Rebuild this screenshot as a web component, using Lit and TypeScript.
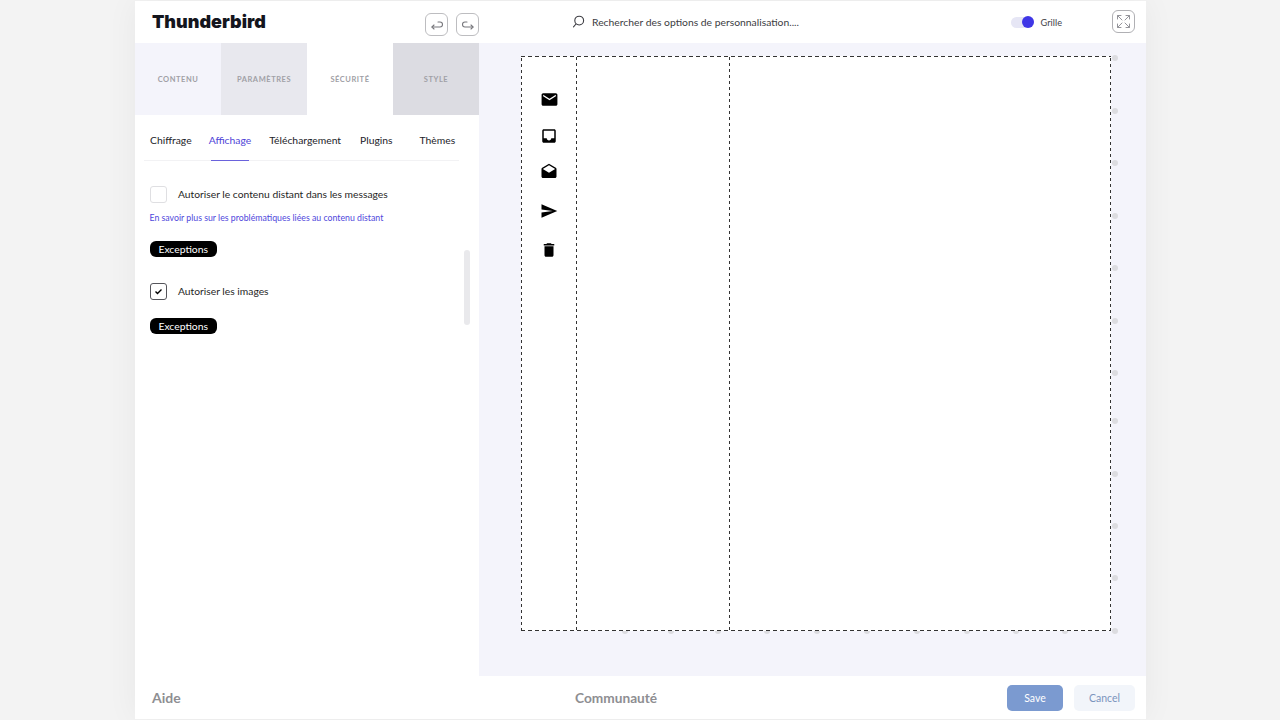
import { LitElement, html, css, svg } from "lit";
import { customElement } from "lit/decorators.js";

const rightDots = [58, 111, 163, 216, 268, 321, 373, 421, 474, 526, 578, 631];
const bottomDots = [625, 671, 718, 767, 817, 867, 917, 967, 1016, 1065];

const icons = [
  svg`<path d="M20 4H4c-1.1 0-2 .9-2 2v12c0 1.1.9 2 2 2h16c1.1 0 2-.9 2-2V6c0-1.1-.9-2-2-2zm0 4-8 5-8-5V6l8 5 8-5v2z"/>`,
  svg`<path d="M19 3H5c-1.1 0-2 .9-2 2v14c0 1.1.9 2 2 2h14c1.1 0 2-.9 2-2V5c0-1.1-.9-2-2-2zm0 12h-4c0 1.66-1.35 3-3 3s-3-1.34-3-3H5V5h14v10z"/>`,
  svg`<path d="M21.99 8c0-.72-.37-1.35-.94-1.7L12 1 2.95 6.3C2.38 6.65 2 7.28 2 8v10c0 1.1.9 2 2 2h16c1.1 0 2-.9 2-2l-.01-10zM12 13 3.74 7.84 12 3l8.26 4.84L12 13z"/>`,
  svg`<path d="M2.01 21 23 12 2.01 3 2 10l15 2-15 2z"/>`,
  svg`<path d="M6 19c0 1.1.9 2 2 2h8c1.1 0 2-.9 2-2V7H6v12zM19 4h-3.500l-1-1h-5l-1 1H5v2h14V4z"/>`,
];

@customElement("app-root")
export class AppRoot extends LitElement {
  static styles = css`
    :host { display: block; width: 1280px; height: 720px; background: #f3f3f3; font-family: Lato, "Liberation Sans", sans-serif; color: #1c1c22; overflow: hidden; }
    .page { height: 720px; padding: 1px 134px 1px 135px; box-sizing: border-box; }
    .window { height: 718px; background: #fff; display: grid; grid-template-columns: 344px 1fr; grid-template-rows: 42px 633px 43px; box-shadow: 0 0 30px rgba(0,0,0,.05); }
    .head-left { display: flex; align-items: center; padding: 0 0 0 17px; }
    .logo { font-family: Inter, "Open Sans", sans-serif; font-weight: 900; font-size: 18px; color: #14151d; flex: 1; margin-top: -1px; }
    .icon-btn { width: 23px; height: 23px; box-sizing: border-box; border: 1px solid #bdbdc0; border-radius: 6px; display: flex; align-items: center; justify-content: center; margin-left: 8px; margin-top: 5px; color: #77777c; }
    .head-right { display: flex; align-items: center; padding: 0 11px 0 93px; }
    .search { display: flex; align-items: center; gap: 7px; font-size: 10.35px; color: #3c3c42; flex: 1; margin-top: -1px; }
    .toggle { display: flex; align-items: center; gap: 7px; font-size: 9.2px; color: #444449; margin-right: 50px; }
    .track { width: 23px; height: 11px; border-radius: 6px; background: #e6e6f5; position: relative; }
    .knob { position: absolute; right: 0; top: -.5px; width: 12px; height: 12px; border-radius: 50%; background: #3f36e6; }
    .expand { width: 23px; height: 23px; box-sizing: border-box; border: 1px solid #b0b0b4; border-radius: 6px; display: flex; align-items: center; justify-content: center; color: #94949a; margin-top: -1px; }
    .left { display: flex; flex-direction: column; }
    .tabs { display: grid; grid-template-columns: repeat(4, 86px); height: 72px; }
    .tab { display: flex; align-items: center; justify-content: center; font-size: 7.5px; font-weight: 700; letter-spacing: .55px; color: #a0a0a6; padding-top: 1px; }
    .t1 { background: #f4f4fb; } .t2 { background: #e8e8ee; } .t3 { background: #fff; } .t4 { background: #dcdce2; }
    .subtabs { display: flex; gap: 18px; margin: 0 20px 0 9px; padding-left: 6px; height: 45px; border-bottom: 1px solid #f2f2f4; font-size: 10.35px; color: #23232a; }
    .sub { display: flex; align-items: center; position: relative; padding-top: 5px; box-sizing: border-box; }
    .sub:nth-child(2) { margin-left: -1px; }
    .sub:nth-child(4) { margin-left: 1px; }
    .sub:nth-child(5) { margin-left: 9px; }
    .sub.on { color: #4f45d8; }
    .sub.on::after { content: ""; position: absolute; left: 2px; right: 2px; bottom: -1px; height: 1px; background: #6a62dc; }
    .content { flex: 1; position: relative; padding: 24px 0 0 14.5px; }
    .row { display: flex; align-items: center; gap: 11.5px; font-size: 10.3px; height: 18px; color: #1f1f26; }
    .box { width: 17px; height: 17px; box-sizing: border-box; border: 1px solid #dfdfe2; border-radius: 3px; display: flex; align-items: center; justify-content: center; }
    .box.on { border-color: #55555b; }
    .label { margin-top: -1px; }
    .link { font-size: 8.75px; color: #5048dc; margin-top: 9px; line-height: 11px; }
    .pill { display: inline-flex; align-items: center; justify-content: center; width: 67.5px; height: 16px; border-radius: 6px; background: #000; color: #fff; font-size: 10.4px; }
    .p1 { margin-top: 18px; }
    .r2 { margin-top: 25px; }
    .p2 { margin-top: 18px; }
    .scroll { position: absolute; left: 329px; top: 89px; width: 6px; height: 75px; border-radius: 3px; background: #e9e9ec; }
    .stage { background: #f4f4fb; position: relative; overflow: hidden; padding: 13px 35px 0 42px; }
    .canvas {
      width: 590px; height: 575px; box-sizing: border-box; position: relative;
      display: grid; grid-template-columns: 56px 153px 1fr; padding: 0 1px 1px 0;
      background-color: #fff;
      background-image:
        repeating-linear-gradient(90deg, #333 0 4px, transparent 4px 7px),
        repeating-linear-gradient(90deg, #333 0 4px, transparent 4px 7px),
        repeating-linear-gradient(0deg, #333 0 3px, transparent 3px 6px),
        repeating-linear-gradient(0deg, #333 0 3px, transparent 3px 6px);
      background-size: 100% 1px, 100% 1px, 1px 100%, 1px 100%;
      background-position: 0 0, 0 100%, 0 0, 100% 0;
      background-repeat: no-repeat;
    }
    .col {
      background-image: repeating-linear-gradient(0deg, #333 0 3px, transparent 3px 6px);
      background-size: 1px 100%; background-position: 100% 0; background-repeat: no-repeat;
    }
    .col:last-child { background: none; }
    .rail { display: flex; flex-direction: column; align-items: center; padding-top: 33px; }
    .slot { height: 37px; }
    .slot svg { display: block; width: 18px; height: 18px; margin: 1px; fill: #000; }
    .slot:first-child svg { width: 19px; height: 19px; margin: .5px; }
    .slot:nth-child(2) { height: 36px; }
    .slot:nth-child(3), .slot:nth-child(4) { height: 39px; }
    .dot { position: absolute; width: 6px; height: 6px; border-radius: 50%; background: #dcdce0; }
    .foot { display: flex; align-items: center; font-size: 14px; font-weight: 700; color: #8e8e92; padding-left: 17px; }
    .foot-r { display: flex; align-items: center; padding: 0 11px 0 96px; font-size: 13.7px; font-weight: 700; color: #8e8e92; }
    .foot-r .c { flex: 1; }
    .btn { height: 26px; border-radius: 5px; display: flex; align-items: center; justify-content: center; font-size: 10.5px; font-weight: 400; }
    .save { width: 56px; background: #7b9ad0; color: #fff; margin-right: 11px; }
    .cancel { width: 61px; background: #f2f5fa; color: #7b94bd; }
  `;

  render() {
    const subs: [string, boolean][] = [
      ["Chiffrage", false], ["Affichage", true], ["Téléchargement", false], ["Plugins", false], ["Thèmes", false],
    ];
    return html`<div class="page"><div class="window">
      <div class="head-left">
        <div class="logo">Thunderbird</div>
        <div class="icon-btn"><svg width="14" height="14" viewBox="0 0 14 14" fill="none" stroke="currentColor" stroke-width="1.1" stroke-linecap="round" stroke-linejoin="round"><path d="M2 9h8a2.500 2.500 0 0 0 0-5H8"/><path d="M4 7 2 9l2 2"/></svg></div>
        <div class="icon-btn"><svg width="14" height="14" viewBox="0 0 14 14" fill="none" stroke="currentColor" stroke-width="1.1" stroke-linecap="round" stroke-linejoin="round"><path d="M12 9H4a2.500 2.500 0 0 1 0-5h2"/><path d="m10 7 2 2-2 2"/></svg></div>
      </div>
      <div class="head-right">
        <div class="search">
          <svg width="13" height="13" viewBox="0 0 13 13" fill="none" stroke="#3c3c42" stroke-width="1.1" stroke-linecap="round"><circle cx="7.200" cy="5.600" r="4.400"/><path d="M4 9 1.500 11.800"/></svg>
          Rechercher des options de personnalisation....
        </div>
        <div class="toggle"><div class="track"><div class="knob"></div></div>Grille</div>
        <div class="expand"><svg width="17" height="17" viewBox="0 0 17 17" fill="none" stroke="currentColor" stroke-width="1" stroke-linecap="round" stroke-linejoin="round"><path d="M7 7 2.500 2.500M2.500 6V2.500H6M10 7l4.500-4.500M11 2.500h3.500V6M7 10l-4.500 4.500M2.500 11v3.500H6M10 10l4.500 4.500M14.500 11v3.500H11"/></svg></div>
      </div>
      <div class="left">
        <div class="tabs">
          <div class="tab t1">CONTENU</div><div class="tab t2">PARAMÈTRES</div><div class="tab t3">SÉCURITÉ</div><div class="tab t4">STYLE</div>
        </div>
        <div class="subtabs">
          ${subs.map(([t, on]) => html`<div class="sub ${on ? "on" : ""}">${t}</div>`)}
        </div>
        <div class="content">
          <div class="row"><div class="box"></div><span class="label">Autoriser le contenu distant dans les messages</span></div>
          <div class="link">En savoir plus sur les problématiques liées au contenu distant</div>
          <div class="pill p1">Exceptions</div>
          <div class="row r2"><div class="box on"><svg width="9" height="9" viewBox="0 0 9 9" fill="none" stroke="#000" stroke-width="1.4"><path d="m1.500 4.500 2 2 4-4"/></svg></div><span class="label">Autoriser les images</span></div>
          <div class="pill p2">Exceptions</div>
          <div class="scroll"></div>
        </div>
      </div>
      <div class="stage">
        ${rightDots.map((y) => html`<div class="dot" style="left:${1115 - 479 - 3}px;top:${y - 43 - 3}px"></div>`)}
        ${bottomDots.map((x) => html`<div class="dot" style="left:${x - 479 - 3}px;top:${631 - 43 - 3}px"></div>`)}
        <div class="canvas">
          <div class="col rail">
            ${icons.map((p) => html`<div class="slot"><svg viewBox="0 0 24 24">${p}</svg></div>`)}
          </div>
          <div class="col"></div>
          <div class="col"></div>
        </div>
      </div>
      <div class="foot">Aide</div>
      <div class="foot-r"><div class="c">Communauté</div><div class="btn save">Save</div><div class="btn cancel">Cancel</div></div>
    </div></div>`;
  }
}
